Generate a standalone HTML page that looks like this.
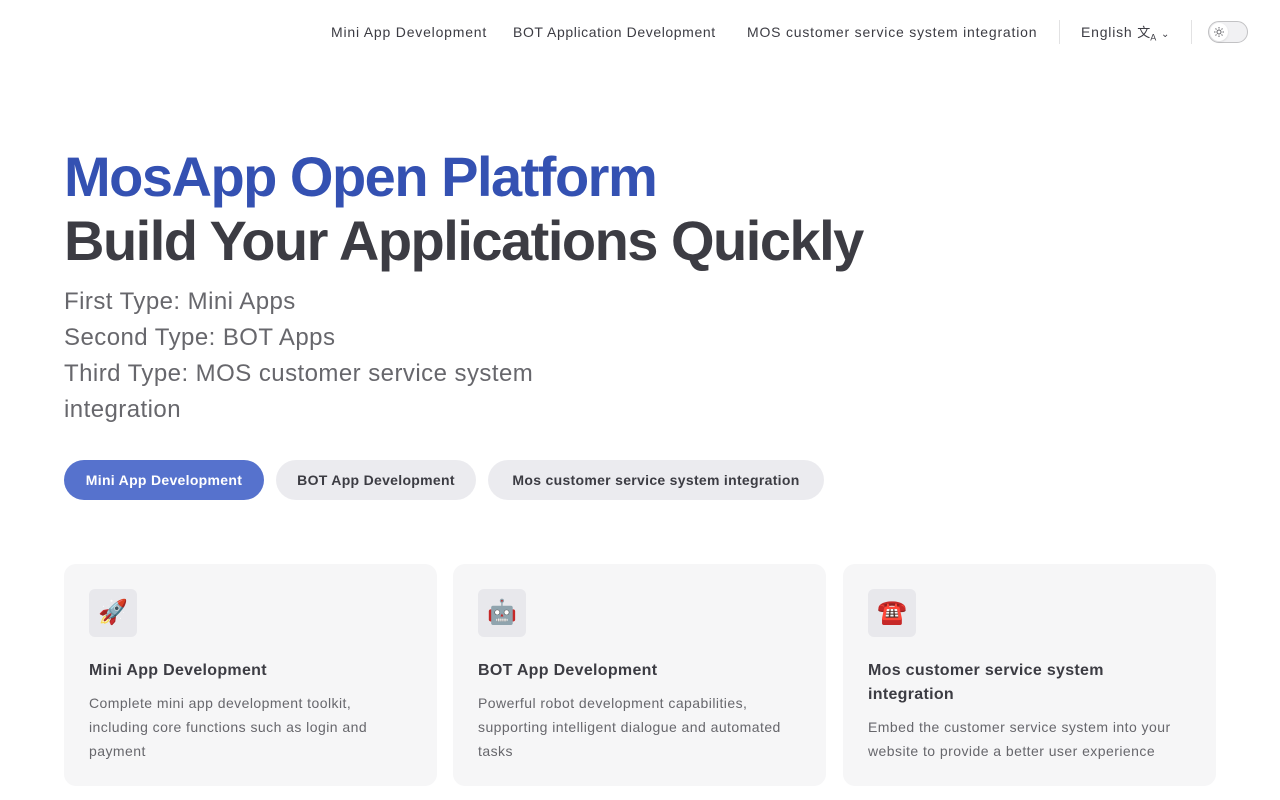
<!DOCTYPE html>
<html><head><meta charset="utf-8"><style>
*{box-sizing:border-box;margin:0;padding:0}
body{width:1280px;height:800px;overflow:hidden;background:#fff;font-family:"Liberation Sans",sans-serif;color:#3c3c43}
.nav{position:absolute;top:0;left:0;right:0;height:64px}
.nav a{position:absolute;top:22px;font-size:14px;color:#3c3c43;text-decoration:none;line-height:20px;white-space:nowrap;letter-spacing:0.8px}
.sep{position:absolute;top:20px;width:1px;height:24px;background:#e2e2e3}
.sw{position:absolute;left:1208px;top:21px;width:40px;height:22px;border:1px solid #c2c2c4;border-radius:11px;background:#f1f1f3}
.sw i{position:absolute;left:1px;top:1px;width:18px;height:18px;border-radius:50%;background:#fff;box-shadow:0 1px 2px rgba(0,0,0,.1)}
.h1{position:absolute;left:64px;top:145px;font-size:56px;line-height:64px;font-weight:700;letter-spacing:-1.5px;white-space:nowrap}
.name{color:#3451b2}
.tag{position:absolute;left:64px;top:284px;width:520px;font-size:24px;line-height:36px;color:#67676c;letter-spacing:0.45px}
.btn{position:absolute;top:460px;height:40px;border-radius:20px;font-size:14px;font-weight:700;line-height:40px;text-align:center;background:#ebebef;color:#3c3c43;letter-spacing:0.3px}
.card{position:absolute;top:564px;width:373px;height:222px;background:#f6f6f7;border-radius:12px;padding:25px 25px}
.ic{width:48px;height:48px;border-radius:6px;background:#e8e8ec;font-size:24px;line-height:48px;text-align:center}
.ct{margin-top:22px;font-size:16px;font-weight:700;line-height:24px;color:#3c3c43;letter-spacing:0.3px;width:300px}
.cd{margin-top:8px;font-size:14px;line-height:24px;color:#67676c;letter-spacing:0.45px;width:315px}
</style></head><body>
<div class="nav">
<a style="left:331px">Mini App Development</a>
<a style="left:513px;letter-spacing:0.6px">BOT Application Development</a>
<a style="left:747px;letter-spacing:0.8px">MOS customer service system integration</a>
<div class="sep" style="left:1059px"></div>
<a style="left:1081px">English <span style="font-size:13px;letter-spacing:0">文<sub style="font-size:9px">A</sub></span> <span style="font-size:10px">⌄</span></a>
<div class="sep" style="left:1191px"></div>
<div class="sw"><i><svg width="18" height="18" viewBox="0 0 18 18"><circle cx="9" cy="9" r="2" fill="none" stroke="#67676c" stroke-width="1"/><g stroke="#67676c" stroke-width="1"><path d="M9 4v1.5M9 12.5V14M4 9h1.5M12.5 9H14M5.5 5.5l1 1M11.5 11.5l1 1M5.5 12.5l1-1M11.5 6.5l1-1"/></g></svg></i></div>
</div>
<div class="h1"><span class="name">MosApp Open Platform</span><br>Build Your Applications Quickly</div>
<div class="tag">First Type: Mini Apps<br>Second Type: BOT Apps<br>Third Type: MOS customer service system integration</div>
<div class="btn" style="left:64px;width:200px;background:#5672cd;color:#fff">Mini App Development</div>
<div class="btn" style="left:276px;width:200px">BOT App Development</div>
<div class="btn" style="left:488px;width:336px">Mos customer service system integration</div>
<div class="card" style="left:64px"><div class="ic">🚀</div><div class="ct">Mini App Development</div><div class="cd">Complete mini app development toolkit, including core functions such as login and payment</div></div>
<div class="card" style="left:453px"><div class="ic">🤖</div><div class="ct">BOT App Development</div><div class="cd">Powerful robot development capabilities, supporting intelligent dialogue and automated tasks</div></div>
<div class="card" style="left:843px"><div class="ic">☎️</div><div class="ct">Mos customer service system integration</div><div class="cd">Embed the customer service system into your website to provide a better user experience</div></div>
</body></html>
